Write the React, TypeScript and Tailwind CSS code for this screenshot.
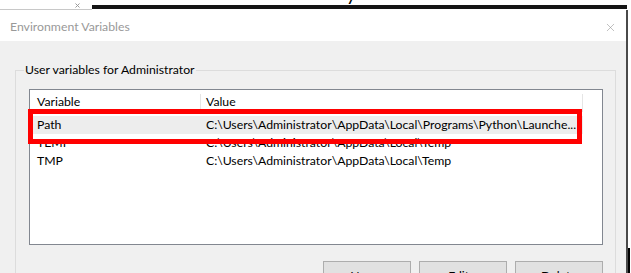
import { X } from "lucide-react";

const FONT = { fontFamily: 'Lato, "Noto Sans", sans-serif' };

const rows = [
  { name: "Path", value: "C:\\Users\\Administrator\\AppData\\Local\\Programs\\Python\\Launche..." },
  { name: "TEMP", value: "C:\\Users\\Administrator\\AppData\\Local\\Temp" },
  { name: "TMP", value: "C:\\Users\\Administrator\\AppData\\Local\\Temp" },
];

function Button({ label }: { label: string }) {
  return (
    <button className="w-[88px] h-[23px] shrink-0 bg-[#e1e1e1] border border-[#adadad] text-[12.25px] text-black leading-[27px]">
      {label}
    </button>
  );
}

export default function App() {
  return (
    <div
      className="relative w-[631px] h-[273px] overflow-hidden bg-white flex flex-col text-[12.25px] text-black"
      style={FONT}
    >
      {/* strip of whatever sits behind the dialog */}
      <div className="relative h-[10px] flex shrink-0">
        <div className="w-[92px] h-[10px] border-b border-[#c8c8c8] flex items-end pl-[75px] pb-[1px]">
          <svg width="5" height="5" viewBox="0 0 5 5" className="text-[#9a9a9a]">
            <path d="M0.5 0.5 L4.5 4.5 M4.5 0.5 L0.5 4.5" stroke="currentColor" strokeWidth="1" />
          </svg>
        </div>
        <div className="w-[535px] h-[4px] mt-[5px] bg-[#151515]" />
        <span className="absolute left-[346px] -top-[19px] text-[20px] leading-[24px] text-black">y</span>
      </div>

      <div className="flex flex-1 min-h-0">
        {/* dialog */}
        <div className="w-[628px] flex flex-col border-r-2 border-[#4a4a4a]">
          <div className="h-[31px] shrink-0 flex items-center justify-between pt-[4px] pl-[10px] pr-[9px] bg-white">
            <span className="text-[#999999]">Environment Variables</span>
            <X size={13} strokeWidth={1} className="text-[#8c8c8c]" />
          </div>

          <div className="flex-1 min-h-0 bg-[#f0f0f0] pt-[21px] pl-[15px] overflow-hidden">
            <fieldset className="w-[601px] border border-[#dcdcdc] px-0 pb-[20px]">
              <legend className="ml-[8px] px-[1px] leading-[16px]">User variables for Administrator</legend>

              <div className="mt-[11px] ml-[13px] w-[574px] h-[156px] border border-[#828790] bg-white">
                <div className="flex h-[26px] pt-[4px] leading-[16px]">
                  <div className="w-[171px] shrink-0 pl-[7px] border-r border-[#e5e5e5] h-[18px]">Variable</div>
                  <div className="w-[382px] shrink-0 pl-[5px] border-r border-[#e5e5e5] h-[18px]">Value</div>
                </div>
                {rows.map((r, i) => (
                  <div
                    key={r.name}
                    className={`flex h-[18px] w-[553px] items-center ${i === 0 ? "bg-[#ededed]" : ""}`}
                  >
                    <div className="w-[171px] shrink-0 pl-[7px]">{r.name}</div>
                    <div className="pl-[5px] whitespace-nowrap">{r.value}</div>
                  </div>
                ))}
              </div>

              <div className="mt-[16px] mr-[12px] flex justify-end gap-[8px]">
                <Button label="New..." />
                <Button label="Edit..." />
                <Button label="Delete" />
              </div>
            </fieldset>
          </div>
        </div>

        {/* edge of the next window */}
        <div className="flex-1 flex flex-col justify-end">
          <div className="w-[2px] h-[25px] bg-black" />
        </div>
      </div>

      {/* annotation */}
      <div className="absolute left-[28px] top-[109px] w-[554px] h-[35px] border-[5px] border-[#ff0000]" />
    </div>
  );
}
